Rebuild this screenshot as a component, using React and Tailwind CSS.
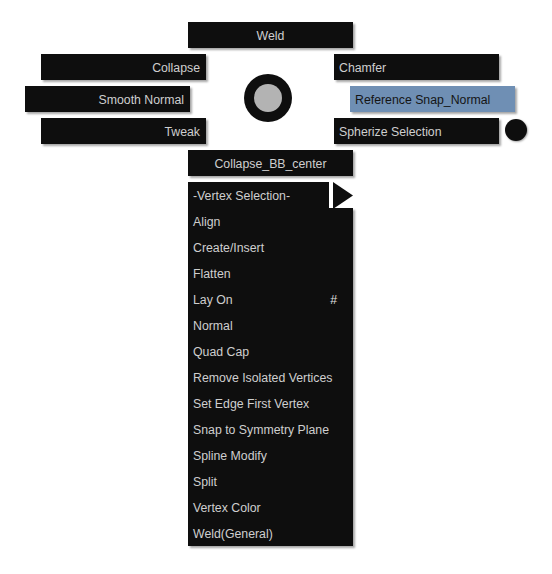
import React from 'react';

const font = { fontFamily: '"Liberation Sans", Arial, sans-serif' };

// pie slots placed around the center ring
const slots = [
  { label: 'Weld', pos: 'left-[188px] top-[22px]', align: 'justify-center' },
  { label: 'Collapse', pos: 'left-[41px] top-[54px]', align: 'justify-end pr-[6px]' },
  { label: 'Smooth Normal', pos: 'left-[25px] top-[86px]', align: 'justify-end pr-[6px]' },
  { label: 'Tweak', pos: 'left-[41px] top-[118px]', align: 'justify-end pr-[6px]' },
  { label: 'Collapse_BB_center', pos: 'left-[188px] top-[150px]', align: 'justify-center' },
  { label: 'Chamfer', pos: 'left-[334px] top-[54px]', align: 'justify-start pl-[5px]' },
  { label: 'Reference Snap_Normal', pos: 'left-[350px] top-[86px]', align: 'justify-start pl-[5px]', active: true },
  { label: 'Spherize Selection', pos: 'left-[334px] top-[118px]', align: 'justify-start pl-[5px]' },
];

const items = [
  'Align',
  'Create/Insert',
  'Flatten',
  { label: 'Lay On', hotkey: '#' },
  'Normal',
  'Quad Cap',
  'Remove Isolated Vertices',
  'Set Edge First Vertex',
  'Snap to Symmetry Plane',
  'Spline Modify',
  'Split',
  'Vertex Color',
  'Weld(General)',
];

const PieSlot = ({ label, pos, align, active }) => (
  <div
    className={`absolute ${pos} w-[165px] h-[26px] pt-[2px] flex items-center ${align} text-[12.3px] shadow-[2px_2px_2px_rgba(0,0,0,0.35)] ${
      active ? 'bg-[#6f8fb4] text-[#151515]' : 'bg-[#0e0e0e] text-[#cfcfcf]'
    }`}
  >
    {label}
  </div>
);

const App = () => {
  return (
    <div className="relative w-[552px] h-[574px] bg-white overflow-hidden" style={font}>
      {slots.map((s) => (
        <PieSlot key={s.label} {...s} />
      ))}

      {/* center ring */}
      <div className="absolute left-[244px] top-[74px] w-[48px] h-[48px] rounded-full bg-[#0e0e0e] flex items-center justify-center">
        <div className="w-[28px] h-[28px] rounded-full bg-[#b3b3b3]" />
      </div>

      {/* small dot beside Spherize Selection */}
      <div className="absolute left-[505px] top-[119px] w-[22px] h-[22px] rounded-full bg-[#0e0e0e] shadow-[1px_1px_2px_rgba(0,0,0,0.35)]" />

      {/* sub menu */}
      <div className="absolute left-[188px] top-[182px] w-[165px] flex flex-col text-[12.3px] text-[#cfcfcf]">
        <div className="flex h-[26px]">
          <div className="w-[141px] bg-[#0e0e0e] flex items-center pl-[5px] pt-[2px]">-Vertex Selection-</div>
          <div className="flex-1 flex items-center justify-end">
            <svg width="20" height="27" viewBox="0 0 20 27" className="mt-[1px]">
              <polygon points="0,0 20,13.5 0,27" fill="#0e0e0e" />
            </svg>
          </div>
        </div>
        <div className="bg-[#0e0e0e] shadow-[2px_2px_2px_rgba(0,0,0,0.35)] flex flex-col">
          {items.map((it) => {
            const label = typeof it === 'string' ? it : it.label;
            return (
              <div key={label} className="h-[26px] pt-[2px] flex items-center justify-between pl-[5px] pr-[16px]">
                <span>{label}</span>
                {it.hotkey && <span className="text-[#e0e0e0]">{it.hotkey}</span>}
              </div>
            );
          })}
        </div>
      </div>
    </div>
  );
};

export default App;
